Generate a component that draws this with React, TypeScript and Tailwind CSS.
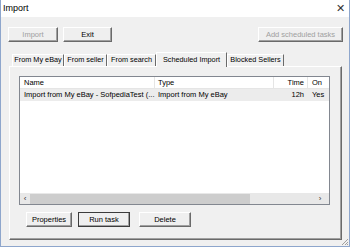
import React from 'react';

const font = { fontFamily: '"Liberation Sans", Arial, sans-serif' };

function WinButton({
  label,
  width,
  disabled,
  focused,
}: {
  label: string;
  width: string;
  disabled?: boolean;
  focused?: boolean;
}) {
  return (
    <div
      className={`${width} h-[15px] flex items-center justify-center text-[7.5px] leading-none bg-[#efefef] border ${
        focused ? 'border-[#3c3c3c]' : 'border-t-white border-l-white border-r-[#6a6a6a] border-b-[#6a6a6a]'
      } shadow-[inset_-1px_-1px_0_#a0a0a0] ${disabled ? 'text-[#a0a0a0]' : 'text-black'}`}
    >
      {label}
    </div>
  );
}

function Tab({ label, width, active }: { label: string; width: string; active?: boolean }) {
  if (active) {
    return (
      <div
        className={`${width} relative z-10 -mb-[1px] h-[15px] flex items-center justify-center bg-[#f0f0f0] border-t border-l border-white border-r border-r-[#6a6a6a] text-[7.3px] whitespace-nowrap`}
      >
        {label}
      </div>
    );
  }
  return (
    <div
      className={`${width} h-[12px] flex items-center justify-center bg-[#f0f0f0] border-t border-l border-white border-r border-r-[#6a6a6a] text-[7.3px] whitespace-nowrap`}
    >
      {label}
    </div>
  );
}

export default function App() {
  return (
    <div
      className="w-[350px] h-[247px] bg-[#f0f0f0] border border-[#8ea6cc] border-t-0 flex flex-col overflow-hidden relative"
      style={font}
    >
      {/* title bar */}
      <div className="h-[17px] bg-white flex items-center justify-between pl-[3px] pr-[5px] -mx-[1px]">
        <span className="text-[9px] text-black">Import</span>
        <span className="text-[11px] text-[#333] leading-none">✕</span>
      </div>

      {/* toolbar */}
      <div className="flex items-center pl-[7px] pr-[6px] mt-[10px]">
        <div className="flex gap-[5px]">
          <WinButton label="Import" width="w-[50px]" disabled />
          <WinButton label="Exit" width="w-[49px]" />
        </div>
        <div className="ml-auto">
          <WinButton label="Add scheduled tasks" width="w-[85px]" disabled />
        </div>
      </div>

      {/* tabs */}
      <div className="mt-[10px] pl-[11px] flex items-end h-[14px]">
        <Tab label="From My eBay" width="w-[52px]" />
        <Tab label="From seller" width="w-[43px]" />
        <Tab label="From search" width="w-[49px]" />
        <Tab label="Scheduled Import" width="w-[71px]" active />
        <Tab label="Blocked Sellers" width="w-[57px]" />
      </div>

      {/* panel */}
      <div className="ml-[8px] w-[333px] h-[174px] border-t border-l border-white border-r border-b border-r-[#6a6a6a] border-b-[#6a6a6a] shadow-[inset_-1px_-1px_0_#a0a0a0] flex flex-col pl-[9px] pt-[9px]">
        {/* list view */}
        <div className="w-[311px] h-[129px] border border-[#828790] bg-white flex flex-col">
          <div className="h-[12px] flex text-[7.5px] border-b border-[#e5e5e5]">
            <div className="w-[135px] pl-[4px] flex items-center border-r border-[#e5e5e5]">Name</div>
            <div className="w-[119px] pl-[3px] flex items-center border-r border-[#e5e5e5]">Type</div>
            <div className="w-[34px] pr-[3px] flex items-center justify-end border-r border-[#e5e5e5]">Time</div>
            <div className="flex-1 pl-[4px] flex items-center">On</div>
          </div>
          <div className="h-[12px] flex text-[7.5px] bg-[#ececec]">
            <div className="w-[135px] pl-[4px] flex items-center whitespace-nowrap overflow-hidden">
              Import from My eBay - SofpediaTest (...
            </div>
            <div className="w-[119px] pl-[3px] flex items-center">Import from My eBay</div>
            <div className="w-[34px] pr-[4px] flex items-center justify-end">12h</div>
            <div className="flex-1 pl-[4px] flex items-center">Yes</div>
          </div>
          <div className="flex-1" />
          {/* horizontal scrollbar */}
          <div className="h-[11px] flex items-center bg-[#e8e8e8]">
            <div className="w-[10px] flex items-center justify-center text-[8px] text-[#333] leading-none">‹</div>
            <div className="w-[220px] h-[10px] bg-[#cdcdcd]" />
            <div className="flex-1" />
            <div className="w-[10px] flex items-center justify-center text-[8px] text-[#333] leading-none">›</div>
            <div className="w-[4px]" />
          </div>
        </div>

        {/* bottom buttons */}
        <div className="mt-[7px] ml-[7px] flex gap-[6px]">
          <WinButton label="Properties" width="w-[46px]" />
          <WinButton label="Run task" width="w-[52px]" focused />
          <div className="ml-[3px]">
            <WinButton label="Delete" width="w-[52px]" />
          </div>
        </div>
      </div>

      {/* size grip */}
      <svg className="absolute right-0 bottom-0" width="8" height="8" viewBox="0 0 8 8">
        <path d="M7 1L1 7M7 4L4 7M7 6L6 7" stroke="#a0a0a0" strokeWidth="1" />
      </svg>
    </div>
  );
}
